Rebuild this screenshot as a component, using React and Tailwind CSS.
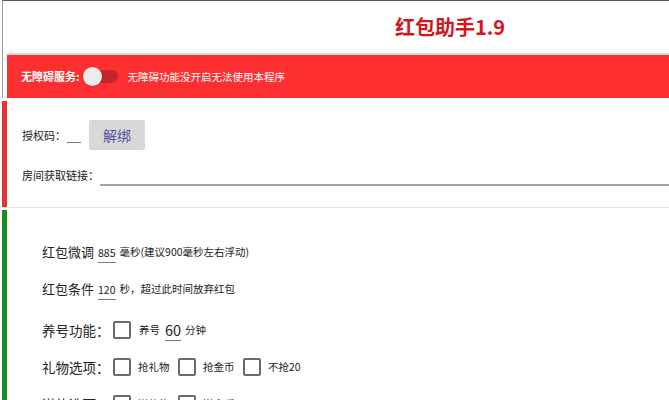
import React from "react";

const font = { fontFamily: '"Noto Sans CJK SC", "Noto Sans", sans-serif' };

function Box() {
  return <span className="inline-block w-[18px] h-[18px] border-2 border-[#6b6b6b] rounded-[2px] bg-white" />;
}

export default function App() {
  return (
    <div className="w-[669px] h-[400px] overflow-hidden bg-white text-[#222]" style={font}>
      {/* header */}
      <div className="h-[53px] border-t border-[#555] ml-[2px] border-l border-l-[#9c9c9c] flex items-center pl-[392px]">
        <span className="text-[20px] font-bold text-[#d4161c] leading-none">红包助手1.9</span>
      </div>
      {/* red bar */}
      <div className="ml-[2px] border-l border-l-[#9c9c9c] pl-[4px] bg-white">
        <div className="h-[2px] bg-[#f2d2d2]" />
        <div className="h-[43px] bg-[#fd2f31] flex items-center pl-[14px] text-white">
          <span className="text-[11px] font-bold">无障碍服务:</span>
          <div className="relative w-[36px] h-[20px] ml-[3px] flex items-center">
            <div className="absolute left-[8px] w-[27px] h-[13px] rounded-full bg-[#c3262b]" />
            <div className="absolute left-0 w-[19px] h-[19px] rounded-full bg-[#ececec] shadow" />
          </div>
          <span className="text-[10.5px] ml-[9px]">无障碍功能没开启无法使用本程序</span>
        </div>
      </div>
      {/* auth section */}
      <div className="ml-[2px] mt-[3px] border-l-[5px] border-[#e53234] h-[106px] pl-[15px] flex flex-col">
        <div className="flex items-center h-[30px] mt-[19px]">
          <span className="text-[11px] whitespace-nowrap">授权码：</span>
          <span className="ml-[1px] w-[14px] border-b border-[#777] h-[10px] mt-[6px]" />
          <button className="ml-[8px] w-[56px] h-[30px] bg-[#d8d8d8] rounded-[2px] text-[14px] text-[#55529e] flex items-center justify-center">解绑</button>
        </div>
        <div className="flex items-center h-[20px] mt-[15px]">
          <span className="text-[11px] whitespace-nowrap">房间获取链接：</span>
          <div className="flex-1 ml-[1px] border-b-2 border-[#a3a3a3] h-[10px] mt-[11px]" />
        </div>
      </div>
      <div className="h-[1px] bg-[#e2e2e2]" />
      <div className="h-[2px]" />
      {/* settings section */}
      <div className="ml-[2px] border-l-[5px] border-[#1b8a1f] h-[200px] pl-[35px] flex flex-col">
        <div className="flex items-center h-[20px] mt-[32px] whitespace-nowrap">
          <span className="text-[13px]">红包微调</span>
          <span className="ml-[4px] text-[10.5px] border-b border-[#777] leading-[14px] pb-[2px] mt-[5px]">885</span>
          <span className="ml-[4px] text-[10.5px]">毫秒(建议900毫秒左右浮动)</span>
        </div>
        <div className="flex items-center h-[20px] mt-[17px] whitespace-nowrap">
          <span className="text-[13px]">红包条件</span>
          <span className="ml-[4px] text-[10.5px] border-b border-[#777] leading-[14px] pb-[2px] mt-[5px]">120</span>
          <span className="ml-[4px] text-[10.5px]">秒，超过此时间放弃红包</span>
        </div>
        <div className="flex items-center h-[20px] mt-[21px] whitespace-nowrap">
          <span className="text-[13.5px] w-[71px]">养号功能：</span>
          <Box />
          <span className="ml-[8px] text-[10.5px]">养号</span>
          <span className="ml-[5px] text-[14.5px] border-b border-[#777] leading-[17px] pb-[2px] mt-[2px]">60</span>
          <span className="ml-[4px] text-[10.5px]">分钟</span>
        </div>
        <div className="flex items-center h-[20px] mt-[17px] whitespace-nowrap">
          <span className="text-[13.5px] w-[71px]">礼物选项：</span>
          <Box />
          <span className="ml-[7px] text-[10.5px] w-[40px]">抢礼物</span>
          <Box />
          <span className="ml-[7px] text-[10.5px] w-[40px]">抢金币</span>
          <Box />
          <span className="ml-[7px] text-[10.5px]">不抢20</span>
        </div>
        <div className="flex items-center h-[20px] mt-[17px] whitespace-nowrap">
          <span className="text-[13.5px] w-[71px]">送礼选项：</span>
          <Box />
          <span className="ml-[7px] text-[10.5px] w-[40px]">送礼物</span>
          <Box />
          <span className="ml-[7px] text-[10.5px]">送金币</span>
        </div>
      </div>
    </div>
  );
}
